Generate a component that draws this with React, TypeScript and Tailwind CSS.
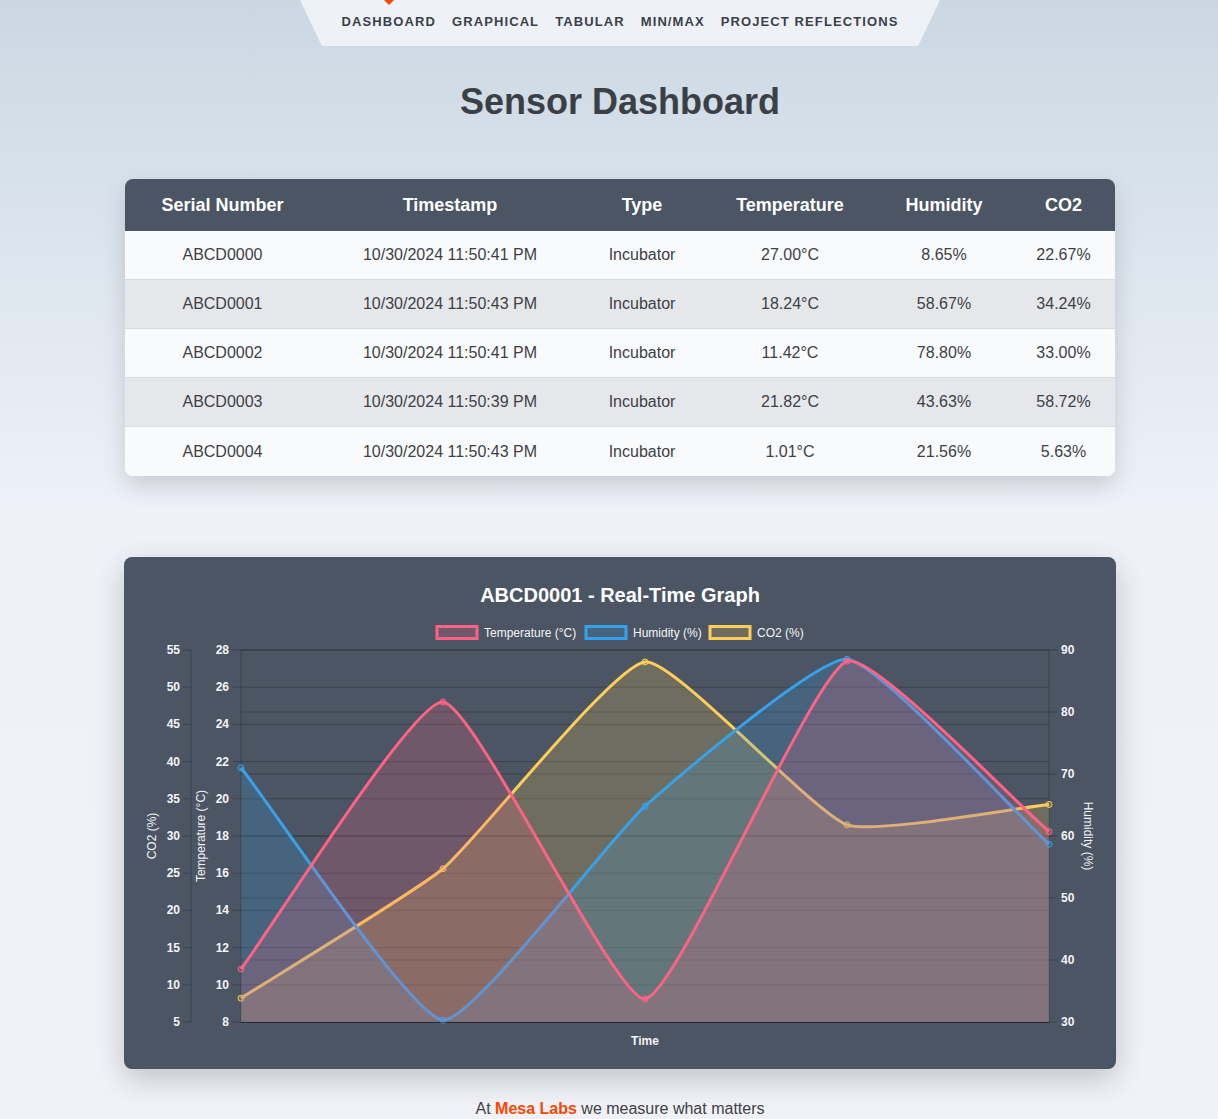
import React from "react";

type Pt = { x: number; y: number };

const rows = [
  ["ABCD0000", "10/30/2024 11:50:41 PM", "Incubator", "27.00°C", "8.65%", "22.67%"],
  ["ABCD0001", "10/30/2024 11:50:43 PM", "Incubator", "18.24°C", "58.67%", "34.24%"],
  ["ABCD0002", "10/30/2024 11:50:41 PM", "Incubator", "11.42°C", "78.80%", "33.00%"],
  ["ABCD0003", "10/30/2024 11:50:39 PM", "Incubator", "21.82°C", "43.63%", "58.72%"],
  ["ABCD0004", "10/30/2024 11:50:43 PM", "Incubator", "1.01°C", "21.56%", "5.63%"],
];

const headers = ["Serial Number", "Timestamp", "Type", "Temperature", "Humidity", "CO2"];
const navItems = ["Dashboard", "Graphical", "Tabular", "Min/Max", "Project Reflections"];

// plot area in page coordinates
const L = 241;
const R = 1049;
const T = 650;
const B = 1022;
const xs = [241, 443, 645, 847, 1049];

const toY = (v: number, min: number, max: number) => B - ((v - min) / (max - min)) * (B - T);

const series = [
  {
    name: "CO2 (%)",
    line: "#ffce56",
    fill: "rgba(255,206,86,0.2)",
    pts: [8.2, 25.6, 53.4, 31.5, 34.24].map((v, i) => ({ x: xs[i], y: toY(v, 5, 55) })),
  },
  {
    name: "Humidity (%)",
    line: "#36a2eb",
    fill: "rgba(54,162,235,0.2)",
    pts: [71, 30.3, 64.8, 88.5, 58.67].map((v, i) => ({ x: xs[i], y: toY(v, 30, 90) })),
  },
  {
    name: "Temperature (°C)",
    line: "#ff6384",
    fill: "rgba(255,99,132,0.2)",
    pts: [10.85, 25.2, 9.24, 27.4, 18.24].map((v, i) => ({ x: xs[i], y: toY(v, 8, 28) })),
  },
];

const clamp = (v: number, a: number, b: number) => Math.max(a, Math.min(b, v));

// same spline as chart.js (tension based)
function curve(pts: Pt[], tension = 0.15) {
  const ctrl = pts.map((cur, i) => {
    const prev = pts[i - 1] ?? cur;
    const next = pts[i + 1] ?? cur;
    const d01 = Math.hypot(cur.x - prev.x, cur.y - prev.y);
    const d12 = Math.hypot(next.x - cur.x, next.y - cur.y);
    let s01 = d01 / (d01 + d12);
    let s12 = d12 / (d01 + d12);
    if (isNaN(s01)) s01 = 0;
    if (isNaN(s12)) s12 = 0;
    const fa = tension * s01;
    const fb = tension * s12;
    return {
      p: { x: clamp(cur.x - fa * (next.x - prev.x), L, R), y: clamp(cur.y - fa * (next.y - prev.y), T, B) },
      n: { x: clamp(cur.x + fb * (next.x - prev.x), L, R), y: clamp(cur.y + fb * (next.y - prev.y), T, B) },
    };
  });
  let d = `M${pts[0].x},${pts[0].y}`;
  for (let i = 1; i < pts.length; i++) {
    const a = ctrl[i - 1].n;
    const b = ctrl[i].p;
    d += ` C${a.x},${a.y} ${b.x},${b.y} ${pts[i].x},${pts[i].y}`;
  }
  return d;
}

const co2Ticks = [55, 50, 45, 40, 35, 30, 25, 20, 15, 10, 5];
const tempTicks = [28, 26, 24, 22, 20, 18, 16, 14, 12, 10, 8];
const humTicks = [90, 80, 70, 60, 50, 40, 30];

const legend = [
  { label: "Temperature (°C)", x: 437, line: "#ff6384", fill: "rgba(255,99,132,0.2)" },
  { label: "Humidity (%)", x: 586, line: "#36a2eb", fill: "rgba(54,162,235,0.2)" },
  { label: "CO2 (%)", x: 710, line: "#ffce56", fill: "rgba(255,206,86,0.2)" },
];

function Chart() {
  const grid = "rgba(0,0,0,0.22)";
  const tickColor = "#f3f4f6";
  return (
    <svg width="992" height="460" viewBox="124 609 992 460" className="block">
      {/* legend */}
      {legend.map((l) => (
        <g key={l.label}>
          <rect x={l.x} y={626.5} width={40} height={12} fill={l.fill} stroke={l.line} strokeWidth={3} />
          <text x={l.x + 47} y={637} fontSize={12} fill="#f3f4f6" fontFamily="'Liberation Sans', Arial, sans-serif">
            {l.label}
          </text>
        </g>
      ))}

      {/* grid lines */}
      {tempTicks.map((_, i) => {
        const y = T + i * ((B - T) / 10);
        return <line key={"t" + i} x1={233} x2={R} y1={y} y2={y} stroke={grid} strokeWidth={1} />;
      })}
      {humTicks.map((_, i) => {
        const y = T + i * ((B - T) / 6);
        return <line key={"h" + i} x1={L} x2={R + 8} y1={y} y2={y} stroke={grid} strokeWidth={1} />;
      })}
      {co2Ticks.map((_, i) => {
        const y = T + i * ((B - T) / 10);
        return <line key={"c" + i} x1={183} x2={191} y1={y} y2={y} stroke={grid} strokeWidth={1} />;
      })}
      <line x1={191} x2={191} y1={T} y2={B} stroke={grid} />
      <line x1={L} x2={L} y1={T} y2={B} stroke={grid} />
      <line x1={R} x2={R} y1={T} y2={B} stroke={grid} />

      {/* datasets, last one drawn first */}
      {series.map((s) => {
        const d = curve(s.pts);
        return (
          <g key={s.name}>
            <path d={`${d} L${R},${B} L${L},${B} Z`} fill={s.fill} />
            <path d={d} fill="none" stroke={s.line} strokeWidth={3} />
            {s.pts.map((p, i) => (
              <circle key={i} cx={p.x} cy={p.y} r={3} fill={s.fill} stroke={s.line} strokeWidth={1} />
            ))}
          </g>
        );
      })}
      <line x1={L} x2={R} y1={B + 0.5} y2={B + 0.5} stroke="rgba(0,0,0,0.3)" />

      {/* tick labels */}
      <g fontFamily="'Liberation Sans', Arial, sans-serif" fontSize={12} fontWeight={700} fill={tickColor}>
        {co2Ticks.map((v, i) => (
          <text key={"cl" + v} x={180} y={T + i * ((B - T) / 10) + 4} textAnchor="end">
            {v}
          </text>
        ))}
        {tempTicks.map((v, i) => (
          <text key={"tl" + v} x={229} y={T + i * ((B - T) / 10) + 4} textAnchor="end">
            {v}
          </text>
        ))}
        {humTicks.map((v, i) => (
          <text key={"hl" + v} x={1061} y={T + i * ((B - T) / 6) + 4}>
            {v}
          </text>
        ))}
        <text x={645} y={1045} textAnchor="middle">
          Time
        </text>
      </g>

      {/* axis titles */}
      <g fontFamily="'Liberation Sans', Arial, sans-serif" fontSize={12} fill={tickColor} textAnchor="middle">
        <text transform="translate(156 836) rotate(-90)">CO2 (%)</text>
        <text transform="translate(205 836) rotate(-90)">Temperature (°C)</text>
        <text transform="translate(1084 836) rotate(90)">Humidity (%)</text>
      </g>
    </svg>
  );
}

export default function App() {
  return (
    <div className="min-h-screen bg-[linear-gradient(180deg,#cad7e2_0%,#dbe4ed_20%,#eef1f8_45%,#f0f2f8_100%)] pb-[14px] font-['Liberation_Sans',Arial,sans-serif] text-[#3b3f46]">
      <div className="ml-[124px] flex w-[992px] flex-col items-center">
        <nav className="relative flex h-[46px] w-[640px] items-center justify-center gap-[16px] bg-[#eef2f7] pb-[4px] [clip-path:polygon(0_0,100%_0,96.6%_100%,3.4%_100%)]">
          {navItems.map((item, i) => (
            <a
              key={item}
              className="relative text-[13px] leading-[15px] font-bold uppercase tracking-[1.1px] text-[#3a3f4a]"
            >
              {i === 0 && (
                <span className="absolute top-[-14px] left-1/2 h-0 w-0 -translate-x-1/2 border-x-[5px] border-t-[5px] border-x-transparent border-t-[#ff4500]" />
              )}
              {item}
            </a>
          ))}
        </nav>

        <h1 className="mt-[34px] text-[36px] leading-[43px] font-bold text-[#3b3f46]">Sensor Dashboard</h1>

        <div className="mt-[56px] w-[990px] overflow-hidden rounded-lg bg-[#f9fafb] shadow-[0_10px_25px_rgba(0,0,0,0.15)]">
          <div className="grid h-[52px] grid-cols-[195px_260px_124px_172px_136px_103px] items-center bg-[#4b5563] text-center text-[18px] font-bold text-white">
            {headers.map((h) => (
              <div key={h}>{h}</div>
            ))}
          </div>
          {rows.map((r, i) => (
            <div
              key={r[0]}
              className={`grid h-[49px] grid-cols-[195px_260px_124px_172px_136px_103px] items-center text-center text-[16px] text-[#3f3f46] ${
                i % 2 === 1 ? "bg-[#e5e7eb]" : "bg-[#f9fafb]"
              } ${i < rows.length - 1 ? "border-b border-[#d8dbe0]" : ""}`}
            >
              {r.map((c, j) => (
                <div key={j}>{c}</div>
              ))}
            </div>
          ))}
        </div>

        <div className="mt-[81px] h-[512px] w-[992px] rounded-lg bg-[#4b5563] shadow-[0_10px_30px_rgba(0,0,0,0.2)]">
          <h2 className="pt-[24px] text-center text-[20px] leading-[28px] font-bold text-white">
            ABCD0001 - Real-Time Graph
          </h2>
          <Chart />
        </div>

        <p className="mt-[28px] text-[16px] leading-[24px] text-[#3f3f46]">
          At <span className="font-bold text-[#ff4500]">Mesa Labs</span> we measure what matters
        </p>
      </div>
    </div>
  );
}
